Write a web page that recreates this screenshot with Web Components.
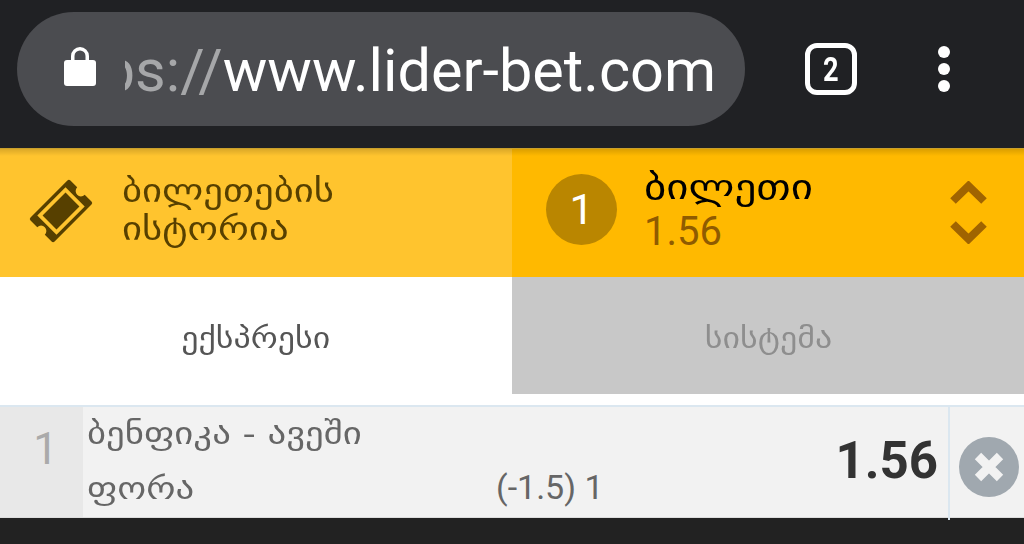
<!DOCTYPE html>
<html>
<head>
<meta charset="utf-8">
<style>
html, body { margin: 0; height: 544px; overflow: hidden; background: #222; font-family: Roboto, "DejaVu Sans", sans-serif; }
body { display: flex; flex-direction: column; }
</style>
<script>
function define(name, html) {
  customElements.define(name, class extends HTMLElement {
    constructor() {
      super();
      this.attachShadow({mode: 'open'}).innerHTML = html;
    }
  });
}

// the Georgian in the shot is wider than DejaVu's, so stretch it
define('wide-text', `
<style>
:host { display: inline-block; white-space: nowrap; transform: scaleX(var(--wide, 1.2)); transform-origin: var(--origin, left center); }
</style>
<slot></slot>
`);

define('browser-bar', `
<style>
:host { display: flex; align-items: center; height: 149px; padding: 0 0 11px 17px; box-sizing: border-box; background: #202124; border-bottom: 1px solid #c9a02c; }
.url { display: flex; align-items: center; width: 728px; height: 114px; border-radius: 57px; background: #4b4c50; box-sizing: border-box; padding: 0 29px 0 47px; }
.lock { width: 32px; height: 42px; flex: none; margin: -6px 29px 0 0; }
.text { flex: 1; display: flex; justify-content: flex-end; overflow: hidden; white-space: nowrap; font: 400 59.4px Roboto, sans-serif; color: #fff; padding-top: 5px; }
.text span { color: #a6a7a9; }
.tabs { width: 52px; height: 52px; margin-left: 60px; flex: none; box-sizing: border-box; border: 5px solid #fff; border-radius: 12px; color: #fff; font: 700 34px/42px Roboto, sans-serif; text-align: center; }
.tabs span { display: inline-block; transform: scaleX(.8); }
.more { display: flex; flex-direction: column; gap: 5px; margin: 1px 0 0 81px; }
.more i { width: 12px; height: 12px; border-radius: 50%; background: #fff; }
</style>
<div class="url">
  <svg class="lock" viewBox="0 0 32 42"><path fill="#fff" d="M7 16V11a9 9 0 0 1 18 0v5h-3.500V11a5.500 5.500 0 0 0-11 0v5z"/><rect y="15" width="32" height="26" rx="3" fill="#fff"/></svg>
  <div class="text"><span>https://</span>www.lider-bet.com</div>
</div>
<div class="tabs"><span>2</span></div>
<div class="more"><i></i><i></i><i></i></div>
`);

define('ticket-panel', `
<style>
:host { display: grid; grid-template-columns: 512px 512px; height: 128px; position: relative; font-family: "DejaVu Sans", sans-serif; }
:host::after { content: ""; position: absolute; left: 0; right: 0; top: 0; height: 7px; background: linear-gradient(rgba(0,0,0,.14), rgba(0,0,0,0)); }
.history { background: #ffc42e; color: #574000; display: flex; align-items: center; padding-left: 28px; }
.history svg { width: 66px; height: 66px; flex: none; margin: -5px 28px 0 0; }
.history div { font-size: 32px; line-height: 38px; margin-top: -7px; --wide: 1.21; }
.current { background: #ffb900; display: flex; align-items: center; padding-left: 34px; }
.badge { width: 71px; height: 71px; border-radius: 50%; background: #ba8600; color: #fff; font: 400 43px/71px Roboto, sans-serif; text-align: center; flex: none; margin: -8px 27px 0 0; }
.title { font-size: 35px; line-height: 38px; color: #000; --wide: 1.23; }
.price { font: 400 40px/44px Roboto, sans-serif; color: #8f5b00; padding-top: 4px; }
.info { flex: 1; margin-top: -4px; }
.arrows { display: flex; flex-direction: column; gap: 15px; margin: -2px 37px 0 0; filter: blur(.6px); }
.arrows svg { width: 37px; height: 24px; display: block; }
</style>
<div class="history">
  <svg viewBox="0 0 62 62"><g transform="rotate(-45 31 31)"><path fill="#574000" d="M6.500 15H55.500a2 2 0 0 1 2 2V26a5 5 0 0 0 0 10V45a2 2 0 0 1-2 2H6.500a2 2 0 0 1-2-2V36a5 5 0 0 0 0-10V17a2 2 0 0 1 2-2z"/><rect x="14" y="20" width="34" height="22" fill="#574000" stroke="#ffc42e" stroke-width="3.500"/></g></svg>
  <div><wide-text>ბილეთების</wide-text><br><wide-text>ისტორია</wide-text></div>
</div>
<div class="current">
  <div class="badge">1</div>
  <div class="info"><div class="title"><wide-text>ბილეთი</wide-text></div><div class="price">1.56</div></div>
  <div class="arrows">
    <svg viewBox="0 0 37 24"><path d="M3 20L18.500 5L34 20" fill="none" stroke="#a06400" stroke-width="8"/></svg>
    <svg viewBox="0 0 37 24"><path d="M3 4L18.500 19L34 4" fill="none" stroke="#a06400" stroke-width="8"/></svg>
  </div>
</div>
`);

define('bet-tabs', `
<style>
:host { display: grid; grid-template-columns: 512px 512px; height: 128px; background: #fff; font: 29px "DejaVu Sans", sans-serif; --origin: center; --wide: 1.17; }
div { height: 117px; box-sizing: border-box; padding-top: 4px; display: flex; align-items: center; justify-content: center; }
.on { color: #555; background: #fff; }
.off { color: #8e8e8e; background: #c8c8c8; }
</style>
<div class="on"><wide-text>ექსპრესი</wide-text></div><div class="off"><wide-text>სისტემა</wide-text></div>
`);

define('bet-row', `
<style>
:host { display: flex; height: 113px; box-sizing: border-box; border-top: 2px solid #dbe7f0; border-bottom: 1px solid #ddd; background: #f2f2f2; color: #666; font-family: "DejaVu Sans", sans-serif; }
.num { width: 83px; flex: none; box-sizing: border-box; background: #e8e8e8; color: #aaa; font: 400 44px/84px Roboto, sans-serif; text-align: center; padding-left: 8px; }
.main { width: 413px; flex: none; padding-left: 4px; box-sizing: border-box; font-size: 31px; --wide: 1.187; }
.main div { height: 55px; line-height: 53px; white-space: nowrap; }
.spec { width: 110px; flex: none; font: 400 34px Roboto, sans-serif; padding-top: 60px; box-sizing: border-box; white-space: nowrap; }
.odd { flex: 1; font: 700 51px/108px Roboto, sans-serif; color: #333; text-align: right; padding-right: 10px; }
.close { width: 76px; flex: none; border-left: 2px solid #dbe7f0; box-sizing: border-box; display: flex; align-items: center; justify-content: center; padding-left: 3px; margin-bottom: -3px; }
svg { width: 60px; height: 60px; margin-top: 6px; }
</style>
<div class="num">1</div>
<div class="main"><div><wide-text>ბენფიკა - ავეში</wide-text></div><div><wide-text>ფორა</wide-text></div></div>
<div class="spec">(-1.5) 1</div>
<div class="odd">1.56</div>
<div class="close"><svg viewBox="0 0 60 60"><circle cx="30" cy="30" r="30" fill="#a0a8af"/><path d="M19 19L41 41M41 19L19 41" stroke="#f2f2f2" stroke-width="9"/></svg></div>
`);
</script>
</head>
<body>
<browser-bar></browser-bar>
<ticket-panel></ticket-panel>
<bet-tabs></bet-tabs>
<bet-row></bet-row>
</body>
</html>
